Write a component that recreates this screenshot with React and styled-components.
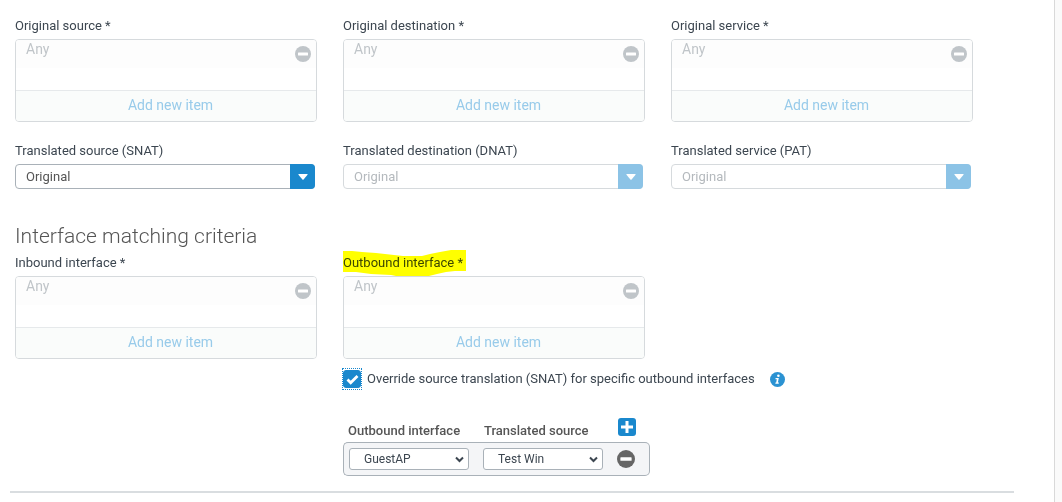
import { useId, useState } from 'react'
import styled, { createGlobalStyle, ThemeProvider } from 'styled-components'

const theme = {
  blue: '#1a88cd',
  ink: '#3c4650',
  muted: '#c0c5c9',
  line: '#d6dadd',
  border: '#a9b1b8'
}

const GlobalStyle = createGlobalStyle`
  *, *::before, *::after {
    box-sizing: border-box;
  }
  body {
    margin: 0;
    background: #fafafa;
    font-family: Roboto, "Liberation Sans", sans-serif;
    font-size: 13px;
    color: ${theme.ink};
  }
  button, select, input {
    margin: 0;
    font-family: inherit;
  }
`

const Panel = styled.main`
  min-height: 100vh;
  margin-right: 7px;
  padding: 16px 40px 0 10px;
  background: #fff;
  border-right: 1px solid #d9d9d9;
`

const Columns = styled.section`
  display: grid;
  grid-template-columns: repeat(3, minmax(0, 1fr));
  padding: 0 15px 0 5px;
  row-gap: ${props => props.$gap}px;
`

const FieldBox = styled.div`
  padding-right: 26px;
`

const Label = styled.label`
  display: block;
  width: max-content;
  margin-bottom: 3px;
  line-height: 20px;
  position: relative;
`

const Heading = styled.h2`
  margin: 35px 0 5px 5px;
  font-size: 21px;
  font-weight: 300;
  line-height: 24px;
  color: #555;
`

const ListBox = styled.div`
  overflow: hidden;
  border: 1px solid ${theme.line};
  border-radius: 4px;
`

const Items = styled.ul`
  height: 50px;
  margin: 0;
  padding: 0;
  list-style: none;
`

const Item = styled.li`
  display: flex;
  justify-content: space-between;
  height: 28px;
  padding: 0 5px 0 10px;
  background: #fdfdfd;
  color: ${theme.muted};
  font-size: 14px;
  line-height: 18px;
`

const IconButton = styled.button`
  display: block;
  align-self: center;
  width: ${props => props.$size}px;
  height: ${props => props.$size}px;
  padding: 0;
  border: 0;
  background: none;
  svg {
    display: block;
    width: 100%;
    height: 100%;
  }
`

const AddButton = styled.button`
  display: block;
  width: 100%;
  height: 31px;
  padding: 0 0 2px 9px;
  border: 0;
  border-top: 1px solid #e6e9eb;
  background: #fafcfb;
  color: #98cbea;
  font-size: 14px;
`

const SelectWrap = styled.div`
  display: grid;
  grid-template-columns: minmax(0, 1fr) 25px;
  margin-right: 2px;
`

const Select = styled.select`
  grid-area: 1 / 1 / 2 / 3;
  appearance: none;
  height: 25px;
  padding: 0 30px 0 10px;
  border: 1px solid ${props => props.disabled ? theme.line : theme.border};
  border-radius: 4px;
  background: #fff;
  color: ${props => props.disabled ? '#b4b9bd' : '#555'};
  font-size: 13px;
  opacity: 1;
`

const Arrow = styled.span`
  grid-area: 1 / 2;
  display: flex;
  align-items: center;
  justify-content: center;
  border-radius: 0 4px 4px 0;
  background: ${props => props.$disabled ? '#8cc3e6' : theme.blue};
  pointer-events: none;
  z-index: 1;
`

const Marker = styled.svg`
  position: absolute;
  left: 0;
  top: -3px;
  width: 123px;
  height: 27px;
  mix-blend-mode: multiply;
  pointer-events: none;
  z-index: 1;
`

const Override = styled.div`
  grid-column: 2 / span 2;
`

const CheckRow = styled.div`
  display: flex;
  align-items: center;
  height: 22px;
  label {
    padding: 0 15px 2px 6px;
  }
`

const Check = styled.span`
  display: grid;
  padding: 1px 0;
  outline: 1px dotted ${theme.blue};
  svg {
    grid-area: 1 / 1;
    place-self: center;
    pointer-events: none;
  }
`

const CheckInput = styled.input`
  grid-area: 1 / 1;
  appearance: none;
  width: 18px;
  height: 18px;
  border: 1px solid ${theme.blue};
  border-radius: 3px;
  background: ${props => props.checked ? theme.blue : '#fff'};
  outline: 0;
`

const Table = styled.table`
  margin-top: 28px;
  border-spacing: 0;
  th {
    height: 24px;
    padding: 0 0 0 1px;
    text-align: left;
    font-weight: 500;
    color: #555;
  }
  th:first-child {
    padding-left: 5px;
  }
  th:last-child {
    vertical-align: top;
  }
  td {
    height: 34px;
    padding: 0;
    border: 1px solid ${theme.border};
    border-width: 1px 0;
    background: #f4f5f7;
  }
  td:first-child {
    width: 140px;
    padding-left: 5px;
    border-left-width: 1px;
    border-radius: 5px 0 0 5px;
  }
  td:nth-child(2) {
    width: 134px;
  }
  td:last-child {
    width: 33px;
    border-right-width: 1px;
    border-radius: 0 5px 5px 0;
  }
`

const SmallWrap = styled.div`
  display: grid;
  width: 120px;
  svg {
    grid-area: 1 / 1;
    place-self: center end;
    margin-right: 5px;
    pointer-events: none;
  }
`

const SmallSelect = styled.select`
  grid-area: 1 / 1;
  appearance: none;
  height: 22px;
  padding: 0 20px 0 14px;
  border: 1px solid ${theme.border};
  border-radius: 3px;
  background: #fff;
  color: ${theme.ink};
  font-size: 12px;
`

const Rule = styled.hr`
  height: 2px;
  margin: 15px 0 0;
  border: 0;
  background: #d9dde0;
`

const MinusIcon = ({ color }) => (
  <svg viewBox="0 0 16 16" aria-hidden="true">
    <circle cx="8" cy="8" r="8" fill={color}/>
    <rect x="3" y="6.5" width="10" height="3" rx="0.5" fill="#fff"/>
  </svg>
)

const PlusIcon = () => (
  <svg viewBox="0 0 18 18" aria-hidden="true">
    <rect width="18" height="18" rx="3" fill={theme.blue}/>
    <path d="M7.5 3h3v4.5H15v3h-4.5V15h-3v-4.5H3v-3h4.5z" fill="#fff"/>
  </svg>
)

const InfoIcon = () => (
  <svg viewBox="0 0 15 15" aria-hidden="true">
    <circle cx="7.5" cy="7.5" r="7.5" fill="#2b92d2"/>
    <circle cx="8.4" cy="3.7" r="1.3" fill="#fff"/>
    <path d="M5.6 6h3.2L7.9 10.6h1l-.2 1.2H5.3l.2-1.2h.7L6.8 7.2H5.4z" fill="#fff"/>
  </svg>
)

const ListField = ({ label, marked }) => {
  const id = useId()
  return(
    <FieldBox>
      <Label as="div" id={id}>
        {label} *
        {
          marked && (
            <Marker viewBox="0 0 123 27" aria-hidden="true">
              <path d="M0 1h9l10 1 14 1 9 1 18 2h19l8-2 10-2 11-2h15v21h-11l-9 1-9 2-8 2H53l-5-1-20-1-15-2H0z" fill="#ff0"/>
            </Marker>
          )
        }
      </Label>
      <ListBox role="group" aria-labelledby={id}>
        <Items>
          <Item>
            Any
            <IconButton type="button" $size={16} aria-label="Remove Any">
              <MinusIcon color={theme.muted}/>
            </IconButton>
          </Item>
        </Items>
        <AddButton type="button">Add new item</AddButton>
      </ListBox>
    </FieldBox>
  )
}

const SelectField = ({ label, disabled }) => {
  const id = useId()
  return(
    <FieldBox>
      <Label htmlFor={id}>{label}</Label>
      <SelectWrap>
        <Select id={id} disabled={disabled}>
          <option>Original</option>
        </Select>
        <Arrow $disabled={disabled}>
          <svg width="10" height="6" viewBox="0 0 10 6" aria-hidden="true">
            <path d="M1 0h8q1 0 .5.8L5.6 5.5q-.6.6-1.2 0L.5.8Q0 0 1 0z" fill="#fff"/>
          </svg>
        </Arrow>
      </SelectWrap>
    </FieldBox>
  )
}

const CellSelect = ({ label, value }) => (
  <SmallWrap>
    <SmallSelect aria-labelledby={label}>
      <option>{value}</option>
    </SmallSelect>
    <svg width="9" height="7" viewBox="0 0 9 7" aria-hidden="true">
      <path d="M1 1.5l3.5 3.5L8 1.5" fill="none" stroke={theme.ink} strokeWidth="2"/>
    </svg>
  </SmallWrap>
)

const App = () => {
  const [override, setOverride] = useState(true)
  return(
    <ThemeProvider theme={theme}>
      <GlobalStyle/>
      <Panel>
        <Columns $gap={19}>
          <ListField label="Original source"/>
          <ListField label="Original destination"/>
          <ListField label="Original service"/>
          <SelectField label="Translated source (SNAT)"/>
          <SelectField label="Translated destination (DNAT)" disabled/>
          <SelectField label="Translated service (PAT)" disabled/>
        </Columns>
        <Heading>Interface matching criteria</Heading>
        <Columns $gap={9}>
          <ListField label="Inbound interface"/>
          <ListField label="Outbound interface" marked/>
          <Override>
            <CheckRow>
              <Check>
                <CheckInput
                  id="override"
                  type="checkbox"
                  checked={override}
                  onChange={e => setOverride(e.target.checked)}
                />
                {
                  override && (
                    <svg width="13" height="11" viewBox="0 0 13 11" aria-hidden="true">
                      <path d="M1.5 5.5l3.2 3.2L11.5 2" fill="none" stroke="#fff" strokeWidth="2.8"/>
                    </svg>
                  )
                }
              </Check>
              <label htmlFor="override">Override source translation (SNAT) for specific outbound interfaces</label>
              <IconButton type="button" $size={15} aria-label="More information">
                <InfoIcon/>
              </IconButton>
            </CheckRow>
            <Table>
              <thead>
                <tr>
                  <th id="outbound">Outbound interface</th>
                  <th id="translated">Translated source</th>
                  <th>
                    <IconButton type="button" $size={18} aria-label="Add row">
                      <PlusIcon/>
                    </IconButton>
                  </th>
                </tr>
              </thead>
              <tbody>
                <tr>
                  <td><CellSelect label="outbound" value="GuestAP"/></td>
                  <td><CellSelect label="translated" value="Test Win"/></td>
                  <td>
                    <IconButton type="button" $size={18} aria-label="Remove row">
                      <MinusIcon color="#666"/>
                    </IconButton>
                  </td>
                </tr>
              </tbody>
            </Table>
          </Override>
        </Columns>
        <Rule/>
      </Panel>
    </ThemeProvider>
  )
}

export default App
